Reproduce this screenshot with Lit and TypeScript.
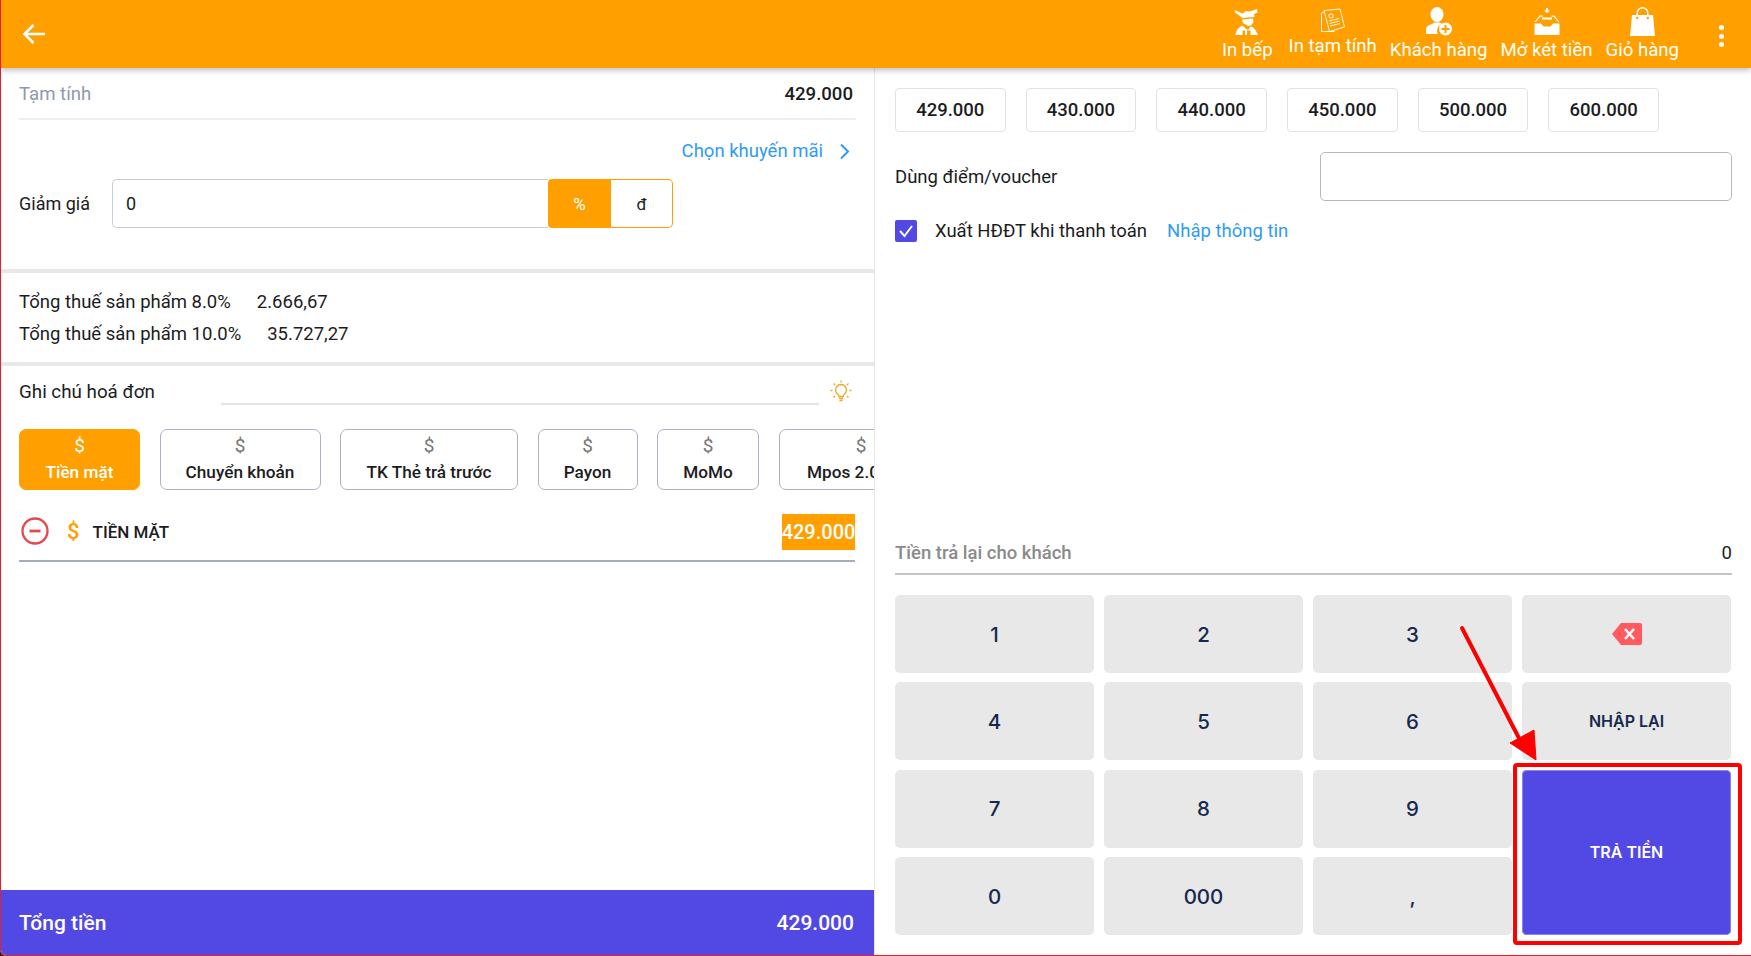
import { LitElement, html, css, svg } from 'lit'
import { customElement } from 'lit/decorators.js'

const QUICK_AMOUNTS = ['429.000', '430.000', '440.000', '450.000', '500.000', '600.000']
// labelPad: the last tile is wider than its label and the strip cuts it off
const PAY_METHODS = [
  { label: 'Chuyển khoản', width: 161, labelPad: 0 },
  { label: 'TK Thẻ trả trước', width: 178, labelPad: 0 },
  { label: 'Payon', width: 100, labelPad: 0 },
  { label: 'MoMo', width: 102, labelPad: 0 },
  { label: 'Mpos 2.0', width: 165, labelPad: 36 },
]

const chefIcon = svg`<svg width="26" height="26" viewBox="0 0 26 26" fill="#fff"><path d="M.5 1l8 3.500L12 2l4 .5L23 0l.5 3.500-3.500 1.500.5 3L8 9 5.500 6.500 1.500 4z"/><path d="M8 10.500l11-1 .5 3.500-2.500 3.500-3 .5-5-3zM1 26l2.500-6 4.500-3.500 2 1.500 1.500 1.500 2.500 1.500 2.500-3.500 2 .5 3 3 2.500 5h-7.500v-4.500h-3.500V26h-2v-4.500H8.500V26z"/></svg>`

const receiptIcon = svg`<svg width="26" height="26" viewBox="0 0 26 26" fill="none" stroke="#fff" stroke-width=".9"><path d="M4 2.500l16-1.500 4.500 18-15 4.500z"/><path d="M4 4l-2.500 1v18.500h13"/><circle cx="11" cy="8" r="2.200"/><path d="M9 13l10-2.500M9.500 15.500l10-2.500M10 18l10-2.500"/></svg>`

const customerIcon = svg`<svg width="28" height="29" viewBox="0 0 28 29" fill="#fff"><ellipse cx="12" cy="7.500" rx="6.500" ry="7.500"/><path d="M1 27v-4c0-4 3-5 6-6l2-1.500h6l2 1.500c-3 1-5 4-5 7 0 1 .3 2 .7 3z"/><circle cx="20.500" cy="22" r="6.500"/><path d="M20.500 18v8M16.500 22h8" stroke="#ffa000" stroke-width="2"/></svg>`

const drawerIcon = svg`<svg width="26" height="27" viewBox="0 0 26 27" fill="#fff"><path d="M12 0h2v2.500h2L13 5l-3-2.500h2z"/><path d="M5.500 7.500h3v1.200H6.200L1.800 14H.6zM17.500 7.500h3L25.400 14h-1.200l-4.400-5.300h-2.300z"/><path d="M.5 15.500h6.500l2.500 3h7l2.500-3h6.500V27H.5z"/><path d="M8 9.500h10v2H8z"/></svg>`

const bagIcon = svg`<svg width="25" height="29" viewBox="0 0 25 29" fill="#fff"><path fill-rule="evenodd" d="M2 8h4.500V6a6 6 0 0 1 12 0v2H23l2 21H0zM8 8h9V6a4.500 4.500 0 0 0-9 0z"/><circle cx="7.200" cy="11" r="1.200" fill="#ffa000"/><circle cx="17.800" cy="11" r="1.200" fill="#ffa000"/></svg>`

const HEADER_ACTIONS = [
  { label: 'In bếp', icon: chefIcon, raised: false },
  { label: 'In tạm tính', icon: receiptIcon, raised: true },
  { label: 'Khách hàng', icon: customerIcon, raised: false },
  { label: 'Mở két tiền', icon: drawerIcon, raised: false },
  { label: 'Giỏ hàng', icon: bagIcon, raised: false },
]

@customElement('app-root')
export class AppRoot extends LitElement {
  static styles = css`
    :host {
      display: block;
      height: 956px;
      overflow: hidden;
      background: #222;
      font-family: Roboto, sans-serif;
      color: #1c1c1e;
      --orange: #ffa000;
      --indigo: #5249e4;
      --blue: #2f9bf4;
    }

    * { box-sizing: border-box; }

    .page {
      position: relative;
      display: flex;
      flex-direction: column;
      height: 956px;
      background: #fff;
      border-left: 1px solid #e5202e;
      border-bottom: 1px solid #e5202e;
      border-bottom-left-radius: 6px;
      overflow: hidden;
    }

    /* header */
    .header {
      flex: none;
      height: 68px;
      margin-left: -1px;
      display: flex;
      align-items: center;
      background: var(--orange);
      box-shadow: 0 2px 6px rgba(0, 0, 0, 0.28);
      color: #fff;
      position: relative;
      z-index: 2;
    }
    .back { margin-left: 22px; display: flex; }
    .actions {
      align-self: flex-start;
      margin-left: auto;
      margin-right: 72px;
      display: flex;
      align-items: flex-start;
      gap: 13px;
    }
    .action {
      display: flex;
      flex-direction: column;
      align-items: center;
      font-size: 18.600px;
      line-height: 21px;
    }
    .action .icon {
      height: 33px;
      margin: 5px 0 2px;
      display: flex;
      align-items: center;
    }
    .action.raised { margin-left: 3px; }
    .action.raised .icon { height: 31px; margin-bottom: 0; }
    .kebab {
      position: absolute;
      right: 27px;
      top: 25px;
      display: flex;
      flex-direction: column;
      gap: 3.500px;
    }
    .kebab i { width: 5px; height: 5px; border-radius: 50%; background: #fff; }

    .body { flex: 1; min-height: 0; display: flex; }

    /* left pane */
    .left {
      width: 874px;
      flex: none;
      display: flex;
      flex-direction: column;
      border-right: 1px solid #e6e6e6;
    }
    .pad { padding: 0 18px; }
    .subtotal {
      height: 52px;
      padding: 2px 3px 0 0;
      display: flex;
      align-items: center;
      justify-content: space-between;
      border-bottom: 2px solid #eee;
      margin: 0 18px;
      font-size: 18.600px;
    }
    .subtotal .name { color: #8e99ab; }
    .subtotal .amount { font-weight: 500; font-size: 18.600px; }
    .promo {
      margin: 20px 24px 0 0;
      display: flex;
      justify-content: flex-end;
      align-items: center;
      gap: 16px;
      color: var(--blue);
      font-size: 18.500px;
      line-height: 22px;
    }
    .discount {
      margin-top: 17px;
      display: flex;
      align-items: center;
      height: 49px;
      font-size: 18px;
    }
    .discount label { width: 93px; }
    .discount .field {
      width: 436px;
      height: 49px;
      padding-left: 13px;
      display: flex;
      align-items: center;
      border: 1px solid #c8ccd6;
      border-right: none;
      border-radius: 5px 0 0 5px;
    }
    .unit {
      width: 63px;
      height: 49px;
      display: flex;
      align-items: center;
      justify-content: center;
      background: var(--orange);
      color: #fff;
      font-size: 17px;
      border-radius: 4px 0 0 4px;
    }
    .unit.off {
      width: 62px;
      background: #fff;
      color: #1c1c1e;
      border: 1px solid var(--orange);
      border-left: none;
      border-radius: 0 5px 5px 0;
    }
    .rule { height: 4px; background: #e8e8e8; flex: none; }
    .rule.first { margin-top: 41px; }
    .taxes {
      height: 89px;
      padding-top: 13px;
      font-size: 18.500px;
      line-height: 32px;
    }
    .taxes div { display: flex; gap: 26px; }
    .note {
      height: 63px;
      padding-top: 8px;
      display: flex;
      align-items: flex-start;
      font-size: 18.800px;
      line-height: 36px;
    }
    .note .label { width: 202px; flex: none; }
    .note .line {
      width: 598px;
      height: 23px;
      border-bottom: 2px solid #e4e4e4;
      margin-top: 8px;
      flex: none;
    }
    .note svg { margin: 6px 0 0 11px; flex: none; }
    .methods {
      height: 61px;
      display: flex;
      gap: 19.500px;
      overflow: hidden;
      padding-right: 0;
    }
    .method {
      flex: none;
      display: flex;
      flex-direction: column;
      align-items: center;
      border: 1.500px solid #aab2c4;
      border-radius: 7px;
      font-weight: 500;
      font-size: 17.200px;
      line-height: 22px;
      padding-top: 5px;
    }
    .method .dollar { color: #777; font-size: 19px; font-weight: 400; margin-bottom: 4px; }
    .method.active {
      width: 121px;
      background: var(--orange);
      border-color: var(--orange);
      color: #fff;
    }
    .method.active .dollar { color: #fff; }
    .paid {
      margin: 25px 19px 0 18px;
      height: 47px;
      display: flex;
      align-items: flex-start;
      border-bottom: 2px solid #a5adbd;
      font-size: 17px;
      font-weight: 500;
    }
    .paid svg { margin: 2px 0 0 2px; }
    .paid .dollar { margin: 4px 0 0 18px; color: var(--orange); font-size: 22px; font-weight: 500; line-height: 26px; }
    .paid .name { margin: 6px 0 0 13px; line-height: 22px; }
    .paid .value {
      margin: -1px 0 0 auto;
      width: 73px;
      height: 36px;
      background: var(--orange);
      color: #fff;
      font-size: 20px;
      display: flex;
      align-items: center;
      justify-content: center;
    }
    .total {
      margin-top: auto;
      height: 65px;
      padding: 0 20px 0 18px;
      display: flex;
      align-items: center;
      justify-content: space-between;
      background: var(--indigo);
      color: #fff;
      font-size: 21px;
      font-weight: 500;
    }

    /* right pane */
    .right {
      flex: 1;
      min-width: 0;
      padding: 20px 19px 0 20px;
      display: flex;
      flex-direction: column;
    }
    .chips { display: flex; gap: 20.200px; }
    .chip {
      width: 110.500px;
      height: 44px;
      display: flex;
      align-items: center;
      justify-content: center;
      border: 1.500px solid #e2e2e2;
      border-radius: 4px;
      font-size: 18.500px;
      font-weight: 500;
    }
    .voucher {
      margin-top: 20px;
      display: flex;
      align-items: center;
      justify-content: space-between;
      font-size: 18.500px;
    }
    .voucher .box {
      width: 412px;
      height: 49px;
      border: 1.500px solid #b9b9b9;
      border-radius: 5px;
    }
    .invoice {
      margin-top: 19px;
      display: flex;
      align-items: center;
      height: 22px;
      font-size: 18.500px;
    }
    .check {
      width: 22px;
      height: 22px;
      background: var(--indigo);
      border-radius: 2px;
      display: flex;
      align-items: center;
      justify-content: center;
      margin-right: 18px;
    }
    .invoice a { color: var(--blue); margin-left: 20px; }
    .change {
      margin-top: auto;
      height: 38px;
      padding-top: 5px;
      display: flex;
      align-items: flex-start;
      justify-content: space-between;
      border-bottom: 2px solid #c4c4c4;
      font-size: 18.500px;
      line-height: 22px;
    }
    .change .name { color: #8a8a8a; font-weight: 500; }
    .pad-grid {
      margin: 20px 0 20px;
      display: grid;
      grid-template-columns: repeat(3, 199px) 209px;
      grid-auto-rows: 78px;
      gap: 9.300px 10px;
    }
    .key {
      display: flex;
      align-items: center;
      justify-content: center;
      background: #e8e8e8;
      border-radius: 5px;
      color: #16294d;
      font-family: Inter, sans-serif;
      font-size: 20.500px;
      font-weight: 500;
    }
    .key.word { font-size: 16px; font-weight: 600; }
    .key.pay {
      grid-row: span 2;
      background: var(--indigo);
      color: #fff;
      box-shadow: 0 0 0 1px #8a84ee inset;
    }

    /* annotation drawn over the screenshot */
    .mark {
      position: absolute;
      left: -1px;
      top: 0;
      pointer-events: none;
      z-index: 3;
    }
  `

  render() {
    return html`
      <div class="page">
        <div class="header">
          <span class="back">
            <svg width="24" height="24" viewBox="0 0 24 24" fill="none" stroke="#fff" stroke-width="2.600">
              <path d="M23 12H3M11.500 3L2.500 12l9 9" />
            </svg>
          </span>
          <div class="actions">
            ${HEADER_ACTIONS.map(
              (a) => html`
                <div class="action ${a.raised ? 'raised' : ''}">
                  <span class="icon">${a.icon}</span>
                  <span>${a.label}</span>
                </div>
              `,
            )}
          </div>
          <div class="kebab"><i></i><i></i><i></i></div>
        </div>

        <div class="body">
          <div class="left">
            <div class="subtotal"><span class="name">Tạm tính</span><span class="amount">429.000</span></div>
            <div class="promo">
              <span>Chọn khuyến mãi</span>
              <svg width="11" height="17" viewBox="0 0 11 17" fill="none" stroke="#2f9bf4" stroke-width="2">
                <path d="M2 1.500l7 7-7 7" />
              </svg>
            </div>
            <div class="discount pad">
              <label>Giảm giá</label>
              <div class="field">0</div>
              <div class="unit">%</div>
              <div class="unit off">đ</div>
            </div>
            <div class="rule first"></div>
            <div class="taxes pad">
              <div><span>Tổng thuế sản phẩm 8.0%</span><span>2.666,67</span></div>
              <div><span>Tổng thuế sản phẩm 10.0%</span><span>35.727,27</span></div>
            </div>
            <div class="rule"></div>
            <div class="note pad">
              <span class="label">Ghi chú hoá đơn</span>
              <span class="line"></span>
              <svg width="22" height="22" viewBox="0 0 22 22" fill="none" stroke="#f5a623" stroke-width="1.300">
                <path d="M11 4.500a5.500 5.500 0 0 0-3 10c.6.500.8 1 .8 2h4.400c0-1 .2-1.500.8-2a5.500 5.500 0 0 0-3-10zM9 18.500h4M9.500 20.500h3" />
                <path d="M11 .5v2M3.500 3.500L5 5M18.500 3.500L17 5M.5 10.500h2M19.500 10.500h2M3.500 17.500L5 16M18.500 17.500L17 16" />
              </svg>
            </div>
            <div class="methods pad">
              <div class="method active"><span class="dollar">$</span><span>Tiền mặt</span></div>
              ${PAY_METHODS.map(
                (m) => html`
                  <div class="method" style="width:${m.width}px">
                    <span class="dollar">$</span><span style="padding-right:${m.labelPad}px">${m.label}</span>
                  </div>
                `,
              )}
            </div>
            <div class="paid">
              <svg width="28" height="28" viewBox="0 0 28 28" fill="none" stroke="#e5484d" stroke-width="2.300">
                <circle cx="14" cy="14" r="12.500" />
                <path d="M8.500 14h11" stroke-width="2.800" />
              </svg>
              <span class="dollar">$</span>
              <span class="name">TIỀN MẶT</span>
              <span class="value">429.000</span>
            </div>
            <div class="total"><span>Tổng tiền</span><span>429.000</span></div>
          </div>

          <div class="right">
            <div class="chips">
              ${QUICK_AMOUNTS.map((v) => html`<div class="chip">${v}</div>`)}
            </div>
            <div class="voucher"><span>Dùng điểm/voucher</span><div class="box"></div></div>
            <div class="invoice">
              <span class="check">
                <svg width="16" height="14" viewBox="0 0 16 14" fill="none" stroke="#fff" stroke-width="2">
                  <path d="M2 7l4.500 5L14 2" />
                </svg>
              </span>
              <span>Xuất HĐĐT khi thanh toán</span>
              <a>Nhập thông tin</a>
            </div>
            <div class="change"><span class="name">Tiền trả lại cho khách</span><span>0</span></div>
            <div class="pad-grid">
              <div class="key">1</div>
              <div class="key">2</div>
              <div class="key">3</div>
              <div class="key">
                <svg width="30" height="22" viewBox="0 0 30 22" fill="#ff5a5f">
                  <path d="M9 0h19a2 2 0 0 1 2 2v18a2 2 0 0 1-2 2H9L0 11z" />
                  <path d="M13 6l9 10M22 6l-9 10" stroke="#fff" stroke-width="2.600" />
                </svg>
              </div>
              <div class="key">4</div>
              <div class="key">5</div>
              <div class="key">6</div>
              <div class="key word">NHẬP LẠI</div>
              <div class="key">7</div>
              <div class="key">8</div>
              <div class="key">9</div>
              <div class="key word pay">TRẢ TIỀN</div>
              <div class="key">0</div>
              <div class="key">000</div>
              <div class="key">,</div>
            </div>
          </div>
        </div>

        <svg class="mark" width="1751" height="956" viewBox="0 0 1751 956" fill="none">
          <path d="M1462 628L1522 744" stroke="#f00" stroke-width="4" stroke-linecap="round" />
          <path d="M1510 743L1534 730L1536 760Z" fill="#f00" stroke="#f00" stroke-linejoin="round" />
          <rect x="1515" y="765" width="225" height="178" rx="2" stroke="#f00" stroke-width="4" />
        </svg>
      </div>
    `
  }
}

declare global {
  interface HTMLElementTagNameMap {
    'app-root': AppRoot
  }
}
